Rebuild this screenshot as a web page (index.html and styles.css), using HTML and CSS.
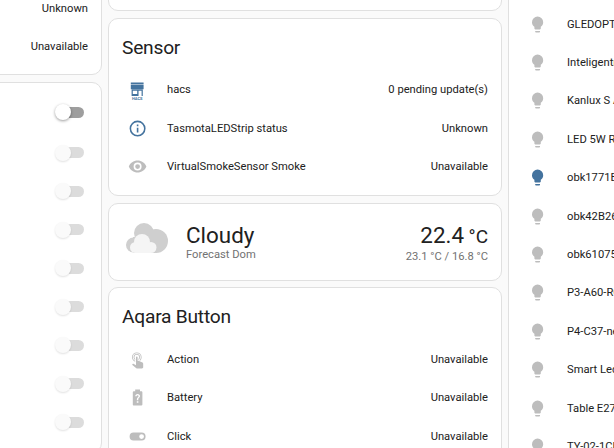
FILE: index.html
```html
<!DOCTYPE html>
<html lang="en">
<head>
<meta charset="utf-8">
<title>Dashboard</title>
<link rel="stylesheet" href="styles.css">
</head>
<body>
<svg class="defs" width="0" height="0" aria-hidden="true">
  <symbol id="bulb" viewBox="0 0 24 24"><path d="M12,2A7,7 0 0,0 5,9C5,11.38 6.19,13.47 8,14.74V17A1,1 0 0,0 9,18H15A1,1 0 0,0 16,17V14.74C17.81,13.47 19,11.38 19,9A7,7 0 0,0 12,2M9,21A1,1 0 0,0 10,22H14A1,1 0 0,0 15,21V20H9V21Z"/></symbol>
</svg>
<main class="board">
  <section class="col col-a">
    <div class="card card-tail">
      <div class="row"><span class="row-value">Unknown</span></div>
      <div class="row"><span class="row-value">Unavailable</span></div>
    </div>
    <div class="card card-list">
      <div class="row"><span class="toggle toggle-off"></span></div>
      <div class="row"><span class="toggle"></span></div>
      <div class="row"><span class="toggle"></span></div>
      <div class="row"><span class="toggle"></span></div>
      <div class="row"><span class="toggle"></span></div>
      <div class="row"><span class="toggle"></span></div>
      <div class="row"><span class="toggle"></span></div>
      <div class="row"><span class="toggle"></span></div>
      <div class="row"><span class="toggle"></span></div>
    </div>
  </section>

  <section class="col col-b">
    <div class="card card-stub"></div>
    <div class="card card-entities">
      <h2 class="card-title">Sensor</h2>
      <div class="row">
        <span class="badge">
          <svg class="icon icon-on icon-hacs" viewBox="0 0 24 24"><path d="M3.5,3H19.5V5.3H3.5ZM3.5,6H19.5V11.5H3.5ZM4.5,12H18.5V20H4.5ZM6,13.3V17.6H11.5V13.3ZM13.2,13.3V20H17V13.3Z" fill-rule="evenodd"/><text class="hacs-mark" x="11.5" y="25" text-anchor="middle">HACS</text></svg>
        </span>
        <span class="row-name">hacs</span>
        <span class="row-value">0 pending update(s)</span>
      </div>
      <div class="row">
        <span class="badge">
          <svg class="icon icon-on" viewBox="0 0 24 24"><path d="M11,9H13V7H11M12,20C7.59,20 4,16.41 4,12C4,7.59 7.59,4 12,4C16.41,4 20,7.59 20,12C20,16.41 16.41,20 12,20M12,2A10,10 0 0,0 2,12A10,10 0 0,0 12,22A10,10 0 0,0 22,12A10,10 0 0,0 12,2M11,17H13V11H11V17Z"/></svg>
        </span>
        <span class="row-name">TasmotaLEDStrip status</span>
        <span class="row-value">Unknown</span>
      </div>
      <div class="row">
        <span class="badge">
          <svg class="icon" viewBox="0 0 24 24"><path d="M12,9A3,3 0 0,0 9,12A3,3 0 0,0 12,15A3,3 0 0,0 15,12A3,3 0 0,0 12,9M12,17A5,5 0 0,1 7,12A5,5 0 0,1 12,7A5,5 0 0,1 17,12A5,5 0 0,1 12,17M12,4.5C7,4.5 2.73,7.61 1,12C2.73,16.39 7,19.5 12,19.5C17,19.5 21.27,16.39 23,12C21.27,7.61 17,4.5 12,4.5Z"/></svg>
        </span>
        <span class="row-name">VirtualSmokeSensor Smoke</span>
        <span class="row-value">Unavailable</span>
      </div>
    </div>

    <div class="card weather">
      <svg class="weather-icon" viewBox="0 0 42 30">
        <g class="cloud-back">
          <circle cx="18" cy="10" r="10"/>
          <circle cx="7.5" cy="22" r="7.5"/>
          <circle cx="30" cy="18" r="12"/>
          <rect x="7" y="14" width="24" height="16"/>
        </g>
        <g class="cloud-front">
          <circle cx="16" cy="19" r="8"/>
          <circle cx="9.5" cy="24.5" r="5.5"/>
          <circle cx="25" cy="24.5" r="5.5"/>
          <rect x="9" y="22" width="16" height="8"/>
        </g>
      </svg>
      <div class="weather-main">
        <div class="weather-state">Cloudy</div>
        <div class="weather-sub">Forecast Dom</div>
      </div>
      <div class="weather-temps">
        <div class="weather-temp">22.4 <span class="weather-unit">°C</span></div>
        <div class="weather-sub">23.1 °C / 16.8 °C</div>
      </div>
    </div>

    <div class="card card-entities card-aqara">
      <h2 class="card-title">Aqara Button</h2>
      <div class="row">
        <span class="badge">
          <svg class="icon" viewBox="0 0 24 24"><path d="M10,9A1,1 0 0,1 11,8A1,1 0 0,1 12,9V13.47L13.21,13.6L18.15,15.79C18.68,16.03 19,16.56 19,17.14V21.5C18.97,22.32 18.32,22.97 17.5,23H11C10.62,23 10.26,22.85 10,22.57L5.1,18.37L5.84,17.6C6.03,17.39 6.3,17.28 6.58,17.28H6.8L10,19V9M11,5A4,4 0 0,1 15,9C15,10.5 14.2,11.77 13,12.46V11.24C13.61,10.69 14,9.89 14,9A3,3 0 0,0 11,6A3,3 0 0,0 8,9C8,9.89 8.39,10.69 9,11.24V12.46C7.8,11.77 7,10.5 7,9A4,4 0 0,1 11,5M11,3A6,6 0 0,1 17,9C17,10.7 16.29,12.23 15.16,13.33L14.16,12.88C15.28,11.96 16,10.56 16,9A5,5 0 0,0 11,4A5,5 0 0,0 6,9C6,11.05 7.23,12.81 9,13.58V14.66C6.67,13.83 5,11.61 5,9A6,6 0 0,1 11,3Z"/></svg>
        </span>
        <span class="row-name">Action</span>
        <span class="row-value">Unavailable</span>
      </div>
      <div class="row">
        <span class="badge">
          <svg class="icon" viewBox="0 0 24 24"><path d="M16.67,4H15V2H9V4H7.33A1.33,1.33 0 0,0 6,5.33V20.67C6,21.4 6.6,22 7.33,22H16.67A1.33,1.33 0 0,0 18,20.67V5.33C18,4.6 17.4,4 16.67,4M13,18.5H11V16.5H13V18.5M14.4,11.6C14.1,12 13.7,12.4 13.3,12.7C12.9,13 12.9,13.5 12.9,15.2H11.1C11.1,13.6 11.3,12.6 12.1,11.9C12.7,11.4 13.2,11 13.2,10.3C13.2,9.6 12.7,9.1 12,9.1C11.3,9.1 10.8,9.6 10.8,10.4H9C9,8.6 10.3,7.4 12,7.4C13.8,7.4 15,8.6 15,10.1C15,10.7 14.8,11.2 14.4,11.6Z"/></svg>
        </span>
        <span class="row-name">Battery</span>
        <span class="row-value">Unavailable</span>
      </div>
      <div class="row">
        <span class="badge">
          <svg class="icon" viewBox="0 0 24 24"><path d="M17,7H7A5,5 0 0,0 2,12A5,5 0 0,0 7,17H17A5,5 0 0,0 22,12A5,5 0 0,0 17,7M17,15A3,3 0 0,1 14,12A3,3 0 0,1 17,9A3,3 0 0,1 20,12A3,3 0 0,1 17,15Z"/></svg>
        </span>
        <span class="row-name">Click</span>
        <span class="row-value">Unavailable</span>
      </div>
    </div>
  </section>

  <section class="col col-c">
    <div class="card card-lights">
      <div class="row"><span class="badge"><svg class="icon"><use href="#bulb"/></svg></span><span class="row-name">GLEDOPTO</span></div>
      <div class="row"><span class="badge"><svg class="icon"><use href="#bulb"/></svg></span><span class="row-name">Inteligentna</span></div>
      <div class="row"><span class="badge"><svg class="icon"><use href="#bulb"/></svg></span><span class="row-name">Kanlux S A</span></div>
      <div class="row"><span class="badge"><svg class="icon"><use href="#bulb"/></svg></span><span class="row-name">LED 5W RGB</span></div>
      <div class="row"><span class="badge"><svg class="icon icon-on"><use href="#bulb"/></svg></span><span class="row-name">obk1771E0</span></div>
      <div class="row"><span class="badge"><svg class="icon"><use href="#bulb"/></svg></span><span class="row-name">obk42B26A</span></div>
      <div class="row"><span class="badge"><svg class="icon"><use href="#bulb"/></svg></span><span class="row-name">obk610754</span></div>
      <div class="row"><span class="badge"><svg class="icon"><use href="#bulb"/></svg></span><span class="row-name">P3-A60-RGB</span></div>
      <div class="row"><span class="badge"><svg class="icon"><use href="#bulb"/></svg></span><span class="row-name">P4-C37-new</span></div>
      <div class="row"><span class="badge"><svg class="icon"><use href="#bulb"/></svg></span><span class="row-name">Smart Led</span></div>
      <div class="row"><span class="badge"><svg class="icon"><use href="#bulb"/></svg></span><span class="row-name">Table E27</span></div>
      <div class="row"><span class="badge"><svg class="icon"><use href="#bulb"/></svg></span><span class="row-name">TY-02-1CH</span></div>
    </div>
  </section>
</main>
</body>
</html>
```

FILE: styles.css
```css
* { box-sizing: border-box; }

html, body {
  margin: 0;
  height: 100%;
  overflow: hidden;
  background: #fafafa;
}

.defs { position: absolute; }

.board {
  display: flex;
  gap: 6px;
  width: 1194px;
  margin-left: -292px;
  font-family: Roboto, sans-serif;
  font-size: 11.2px;
  color: #212121;
}

.col {
  flex: 0 0 394px;
  display: flex;
  flex-direction: column;
  gap: 7px;
}

.col-a { margin-top: -31px; }
.col-b { margin-top: -40px; }
.col-c { margin-top: -20px; }

.card {
  background: #fff;
  border: 1px solid #e0e0e0;
  border-radius: 10px;
  padding: 0 13px 10px;
}

.card-tail { padding-top: 19px; padding-bottom: 8px; }
.card-list { padding-top: 12.4px; }
.card-lights { padding-top: 24px; }
.card-stub { height: 51px; }

.card-title {
  margin: 0;
  height: 51.4px;
  line-height: 58px;
  font-size: 19.2px;
  font-weight: 400;
  letter-spacing: -0.012em;
}

.row {
  display: flex;
  align-items: center;
  height: 38.4px;
}

.card-list .row { height: 38.5px; }
.card-entities { padding-bottom: 9px; }
.card-entities .row { height: 38.6px; }
.card-aqara .card-title { height: 51.8px; }
.card-aqara .row { height: 38.5px; }

.badge {
  flex: 0 0 32px;
  display: flex;
  align-items: center;
  justify-content: center;
}

.icon {
  display: block;
  width: 19.2px;
  height: 19.2px;
  fill: #bdbdbd;
}

.icon-on { fill: #44739e; }
.icon-hacs { overflow: visible; }

.hacs-mark {
  font-family: Roboto, sans-serif;
  font-size: 5px;
  font-weight: 700;
}

.row-name {
  margin-left: 13px;
  flex: 1 1 auto;
  white-space: nowrap;
}

.row-value {
  margin-left: auto;
  white-space: nowrap;
}

.toggle {
  position: relative;
  display: block;
  width: 24px;
  height: 11px;
  margin-left: auto;
  margin-right: 4px;
  border-radius: 6px;
  background: #dcdcdc;
}

.toggle::after {
  content: "";
  position: absolute;
  left: -5px;
  top: -2.5px;
  width: 16px;
  height: 16px;
  border-radius: 50%;
  background: #fafafa;
  box-shadow: 0 1px 2px rgba(0, 0, 0, 0.12);
}

.toggle-off {
  background: #9e9e9e;
  margin-bottom: 4.5px;
}

.toggle-off::after {
  background: #fff;
  box-shadow: 0 1px 3px rgba(0, 0, 0, 0.4);
}

.weather {
  display: flex;
  align-items: center;
  height: 77.8px;
  margin-bottom: -0.6px;
  padding: 0 13px 0 17px;
}

.weather-icon {
  flex: 0 0 42px;
  height: 30px;
  margin-bottom: 9px;
}

.cloud-back { fill: #cfcfcf; }
.cloud-front { fill: #f5f5f5; }

.weather-main { margin-left: 18px; }

.weather-temps {
  margin-left: auto;
  text-align: right;
}

.weather-state,
.weather-temp {
  font-size: 22.4px;
  line-height: 26px;
}

.weather-temp { padding-top: 2px; }

.weather-unit {
  font-size: 19px;
  margin-left: -1px;
}

.weather-sub {
  font-size: 11.2px;
  line-height: 14px;
  color: #727272;
}
```
